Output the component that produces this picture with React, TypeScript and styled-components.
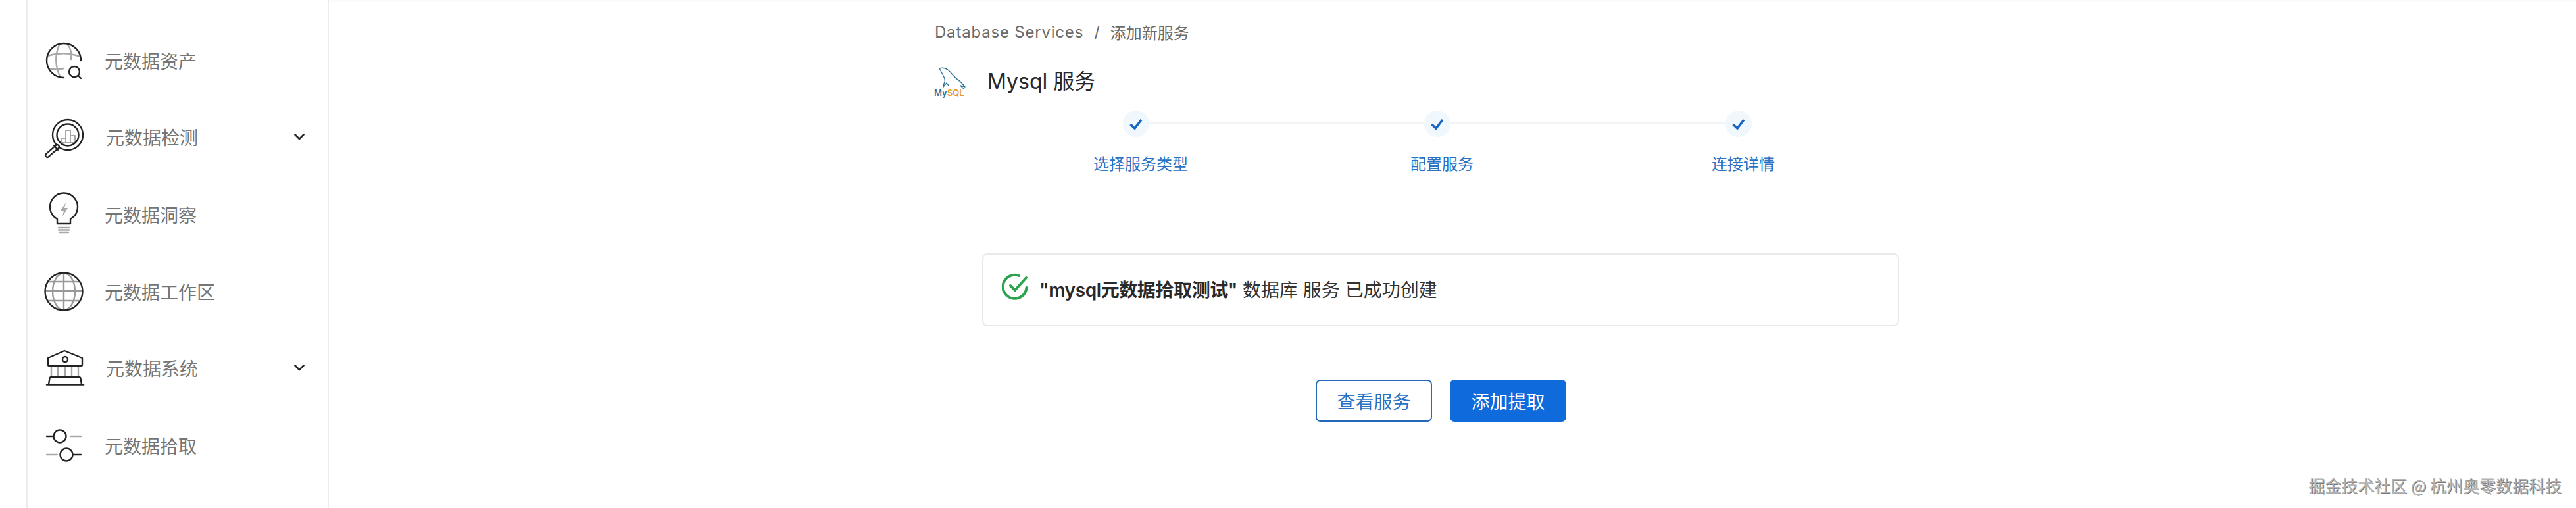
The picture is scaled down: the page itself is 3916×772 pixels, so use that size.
import React from "react";
import styled, { createGlobalStyle } from "styled-components";

const CJK = `"Noto Sans CJK SC"`;
const LATIN = `Inter, ${CJK}, sans-serif`;

const Global = createGlobalStyle`
  html, body { margin: 0; padding: 0; background: #fff; }
  body { width: 3916px; height: 772px; overflow: hidden; font-family: ${LATIN}; }
  * { box-sizing: border-box; }
`;

const Page = styled.div`
  position: relative;
  display: flex;
  width: 3916px;
  height: 772px;
  padding-left: 40px;
  background: #fff;
`;

const Sidebar = styled.nav`
  flex: none;
  width: 460px;
  height: 100%;
  padding-top: 33px;
  border-left: 2px solid #ececec;
  border-right: 2px solid #ececec;
`;

const NavRow = styled.div<{ $expandable?: boolean }>`
  display: flex;
  align-items: center;
  height: 117px;
  padding-left: 25px;
  padding-right: 35px;
  margin-top: ${(p) => (p.$expandable ? -1 : 0)}px;
  margin-bottom: ${(p) => (p.$expandable ? 1 : 0)}px;
`;

const IconBox = styled.svg`
  flex: none;
  width: 60px;
  height: 60px;
  overflow: visible;
  fill: none;
  stroke-linecap: round;
  stroke-linejoin: round;
`;

const NavLabel = styled.span<{ $expandable?: boolean }>`
  margin-left: ${(p) => (p.$expandable ? 34 : 32)}px;
  font-family: ${CJK}, sans-serif;
  font-size: 28px;
  line-height: 40px;
  color: #757575;
`;

const Chevron = styled.svg`
  flex: none;
  margin-left: auto;
  width: 16px;
  height: 10px;
  fill: none;
  stroke: #262626;
  stroke-width: 2.6;
  stroke-linecap: round;
  stroke-linejoin: round;
`;

const Main = styled.main`
  flex: 1;
  padding-left: 918px;
  box-shadow: inset 0 3px 0 #fbfbfb;
`;

const Column = styled.div`
  width: 1544px;
`;

const Breadcrumb = styled.div`
  display: flex;
  align-items: center;
  height: 36px;
  margin-top: 30px;
  padding-left: 3px;
  font-size: 24px;
  color: #6b6b6b;
`;

const Crumb = styled.span`
  letter-spacing: 0.8px;
`;

const CrumbCurrent = styled.span`
  font-family: ${CJK}, sans-serif;
`;

const CrumbSep = styled.span`
  margin: 0 16px;
`;

const TitleRow = styled.div`
  display: flex;
  align-items: center;
  height: 50px;
  margin-top: 33px;
  padding-left: 1px;
`;

const Logo = styled.svg`
  flex: none;
  width: 52px;
  height: 50px;
  fill: none;
`;

const Title = styled.h1`
  margin: 0 0 0 30px;
  font-size: 32px;
  font-weight: 400;
  line-height: 50px;
  color: #292929;
`;

const Stepper = styled.div`
  margin-top: 19px;
`;

const StepTrack = styled.div`
  display: flex;
  align-items: center;
  width: 956px;
  margin-left: 289px;
`;

const StepCircle = styled.div`
  flex: none;
  display: flex;
  align-items: center;
  justify-content: center;
  width: 40px;
  height: 40px;
  border-radius: 50%;
  background: #f1f8fd;
`;

const StepLine = styled.div`
  flex: 1;
  height: 4px;
  margin-bottom: 3px;
  background: #f1f4f6;
`;

const StepCheck = styled.svg`
  width: 40px;
  height: 40px;
  fill: none;
  stroke: #1766c6;
  stroke-width: 3.6;
`;

const StepLabels = styled.div`
  display: grid;
  grid-template-columns: repeat(3, 458px);
  justify-content: center;
  margin-top: 22px;
  padding-left: 4px;
`;

const StepLabel = styled.div`
  text-align: center;
  font-family: ${CJK}, sans-serif;
  font-size: 24px;
  line-height: 36px;
  color: #2a72c4;
`;

const Alert = styled.div`
  display: flex;
  align-items: flex-start;
  width: 1394px;
  height: 111px;
  margin: 119px 0 0 75px;
  padding: 28px 0 0 28px;
  border: 2px solid #e9e9e9;
  border-radius: 8px;
  background: #fff;
`;

const AlertIcon = styled.svg`
  flex: none;
  width: 42px;
  height: 42px;
  fill: none;
  stroke: #2ba34f;
  stroke-width: 4;
  stroke-linecap: round;
  stroke-linejoin: round;
`;

const AlertText = styled.div`
  margin: 0 0 0 15px;
  font-size: 28px;
  line-height: 52px;
  color: #333;
  white-space: pre;
`;

const AlertName = styled.strong`
  font-weight: 600;
  letter-spacing: -0.4px;
  color: #292929;
`;

const Actions = styled.div`
  display: flex;
  justify-content: center;
  gap: 27px;
  margin-top: 81px;
  padding-left: 1px;
`;

const Button = styled.button<{ $primary?: boolean }>`
  width: 177px;
  height: 64px;
  padding: 0;
  border: 2px solid ${(p) => (p.$primary ? "#0f6bdc" : "#2468b8")};
  border-radius: 7px;
  background: ${(p) => (p.$primary ? "#0f6bdc" : "#fff")};
  color: ${(p) => (p.$primary ? "#fff" : "#2a72c4")};
  font-family: ${CJK}, sans-serif;
  font-size: 28px;
`;

const Watermark = styled.div`
  position: absolute;
  right: 22px;
  bottom: 16px;
  font-family: "Noto Sans CJK SC", sans-serif;
  font-size: 25px;
  line-height: 38px;
  color: #b4b4b4;
  text-shadow: 1px 1px 0 #777, -1px -1px 0 #fff;
  white-space: pre;
`;

const dark = { stroke: "#232323", strokeWidth: 2.4 };
const gray = { stroke: "#a8a8a8", strokeWidth: 2.4 };

const AssetIcon = () => (
  <IconBox viewBox="0 0 60 60">
    <g {...gray}>
      <path d="M5 23Q30 15 55 24" />
      <path d="M7 42Q18 45 30 42" />
      <path d="M23 6Q13 30 24 54" />
      <path d="M36 6Q43 15 41 28" />
    </g>
    <g {...dark}>
      <path d="M30 56A26 26 0 1 1 56 30" />
      <circle cx="46" cy="47" r="8" />
      <path d="M52 53L56 57" />
    </g>
  </IconBox>
);

const QualityIcon = () => (
  <IconBox viewBox="0 0 60 60">
    <path d="M27 39V32H33M33 39V20H40V39M40 28H47V39M26 39H48" stroke="#a8a8a8" strokeWidth="2" />
    <g {...dark}>
      <circle cx="36" cy="27" r="23" />
      <circle cx="36" cy="27" r="16.5" />
    </g>
    <path d="M20 45L5 58" stroke="#232323" strokeWidth="8" />
    <path d="M20 45L5 58" stroke="#fff" strokeWidth="3.4" />
    <path d="M15 43L21 50" stroke="#232323" strokeWidth="2.2" />
  </IconBox>
);

const InsightIcon = () => (
  <IconBox viewBox="0 0 60 60">
    <path d="M33 12L25 24H30L28 33L36 20H31Z" fill="#a8a8a8" />
    <path d="M22 50H38M22 53.5H38M23 57H37" {...gray} />
    <path d="M20 37V44H40V37A21 21 0 1 0 20 37Z" {...dark} />
  </IconBox>
);

const WorkspaceIcon = () => (
  <IconBox viewBox="0 0 60 60">
    <g stroke="#989898" strokeWidth="2.4">
      <ellipse cx="30" cy="30" rx="17" ry="28" />
      <path d="M30 2V58M6 15H54M2 29H58M6 44H54" />
    </g>
    <circle cx="30" cy="30" r="28.5" {...dark} />
  </IconBox>
);

const SystemIcon = () => (
  <IconBox viewBox="0 0 60 60">
    <path d="M11 27V44M21 27V44M32 27V44M42 27V44M52 27V44" {...gray} />
    <g {...dark}>
      <path d="M8 27H56Q58 27 58 25V15L31 4L6 15V25Q6 27 8 27Z" />
      <circle cx="32" cy="17" r="4" />
      <path d="M7 55L8.5 46Q9 44 11 44H53Q55 44 55.5 46L57 55" />
      <path d="M4 55.5H60" />
    </g>
  </IconBox>
);

const ExtractIcon = () => (
  <IconBox viewBox="0 0 60 60">
    <path d="M40 16H56M4 44H20" {...gray} />
    <g {...dark}>
      <path d="M4 16H14M44 44H56" />
      <circle cx="24" cy="16" r="9.5" />
      <circle cx="34" cy="44" r="9.5" />
    </g>
  </IconBox>
);

const navItems: { label: string; Icon: React.FC; expandable?: boolean }[] = [
  { label: "元数据资产", Icon: AssetIcon },
  { label: "元数据检测", Icon: QualityIcon, expandable: true },
  { label: "元数据洞察", Icon: InsightIcon },
  { label: "元数据工作区", Icon: WorkspaceIcon },
  { label: "元数据系统", Icon: SystemIcon, expandable: true },
  { label: "元数据拾取", Icon: ExtractIcon },
];

const steps = ["选择服务类型", "配置服务", "连接详情"];

const Check = () => (
  <StepCheck viewBox="0 0 40 40">
    <path d="M11.5 21L18 27L28 14" />
  </StepCheck>
);

export default function App() {
  return (
    <Page>
      <Global />
      <Sidebar>
        {navItems.map(({ label, Icon, expandable }) => (
          <NavRow key={label} $expandable={expandable}>
            <Icon />
            <NavLabel $expandable={expandable}>{label}</NavLabel>
            {expandable && (
              <Chevron viewBox="0 0 16 10">
                <path d="M1.5 1.5L8 8L14.5 1.5" />
              </Chevron>
            )}
          </NavRow>
        ))}
      </Sidebar>
      <Main>
        <Column>
          <Breadcrumb>
            <Crumb>Database Services</Crumb>
            <CrumbSep>/</CrumbSep>
            <CrumbCurrent>添加新服务</CrumbCurrent>
          </Breadcrumb>
          <TitleRow>
            <Logo viewBox="0 0 52 50">
              <path
                d="M9 5C15 3 21 5 26 11C31 17 36 22 41 25L48 33L41 31L47 37M9 5L14 14C17 20 19 24 16 28L15 33L20 27L24 32"
                stroke="#2b7494"
                strokeWidth="1.4"
                strokeLinejoin="round"
              />
              <text x="1" y="47" fontFamily="Inter, sans-serif" fontSize="13" fontWeight="600" fill="#2a6d9e">
                My
                <tspan fill="#e59a1f">SQL</tspan>
              </text>
            </Logo>
            <Title>Mysql 服务</Title>
          </TitleRow>
          <Stepper>
            <StepTrack>
              <StepCircle>
                <Check />
              </StepCircle>
              <StepLine />
              <StepCircle>
                <Check />
              </StepCircle>
              <StepLine />
              <StepCircle>
                <Check />
              </StepCircle>
            </StepTrack>
            <StepLabels>
              {steps.map((s) => (
                <StepLabel key={s}>{s}</StepLabel>
              ))}
            </StepLabels>
          </Stepper>
          <Alert>
            <AlertIcon viewBox="0 0 42 42">
              <path d="M37.5 22A18 18 0 1 1 26 4" />
              <path d="M13 19L20 26L37 7" />
            </AlertIcon>
            <AlertText>
              <AlertName>"mysql元数据拾取测试"</AlertName> 数据库 服务 已成功创建
            </AlertText>
          </Alert>
          <Actions>
            <Button>查看服务</Button>
            <Button $primary>添加提取</Button>
          </Actions>
        </Column>
      </Main>
      <Watermark>掘金技术社区 @ 杭州奥零数据科技</Watermark>
    </Page>
  );
}
